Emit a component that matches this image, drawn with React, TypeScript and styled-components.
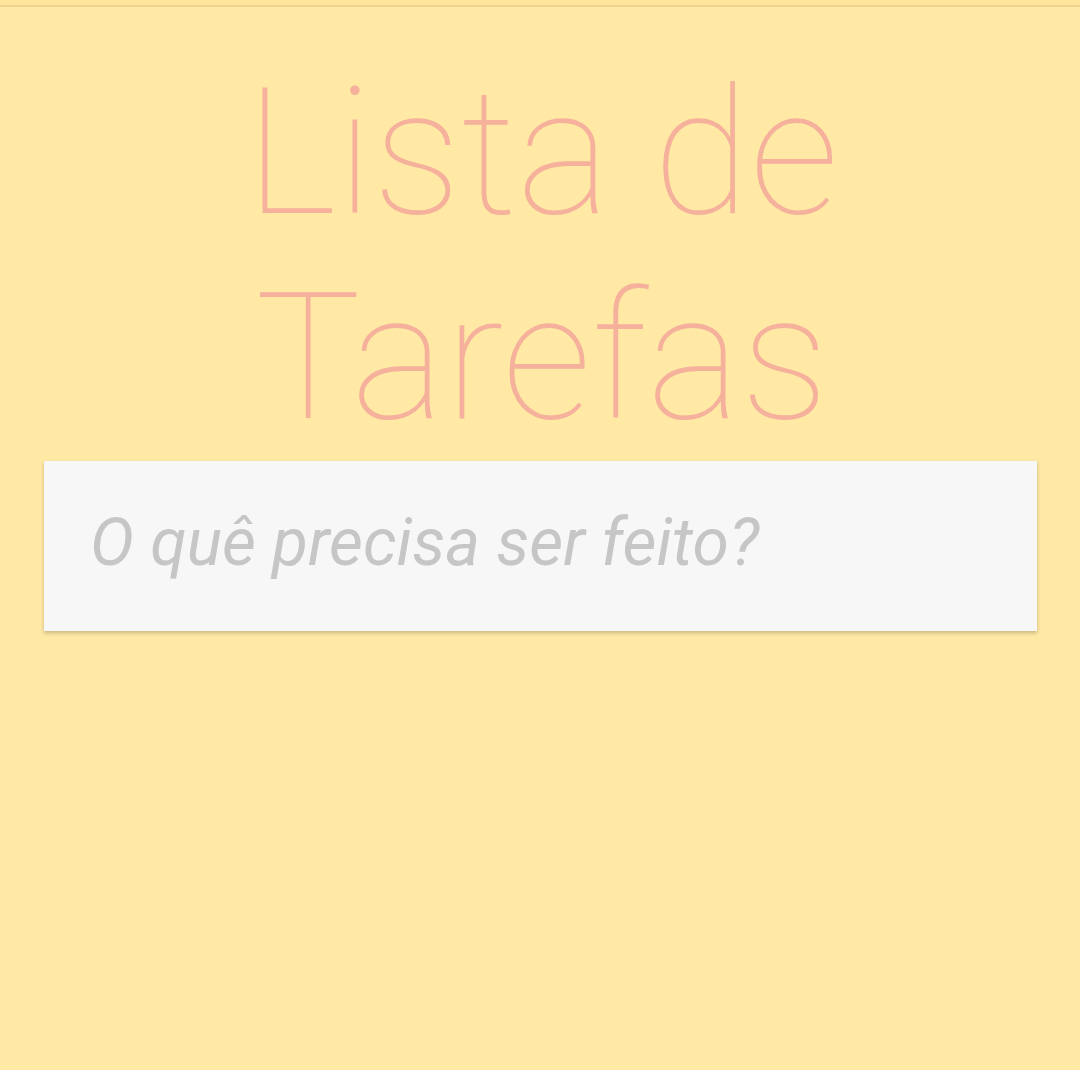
import styled, { createGlobalStyle } from 'styled-components'

const GlobalStyle = createGlobalStyle`
  html, body {
    margin: 0;
    padding: 0;
    background: #ffe9a5;
  }
  body {
    font-family: Roboto, "Liberation Sans", sans-serif;
  }
`

const Page = styled.div`
  min-height: 1070px;
  background: #ffe9a5;
  display: flex;
  flex-direction: column;
  align-items: stretch;
`

const TopBar = styled.div`
  height: 5px;
  background: #ffe49b;
  border-bottom: 2px solid #eed291;
`

const Title = styled.h1`
  margin: 43px 0 1px;
  font-family: Roboto, "Liberation Sans", sans-serif;
  font-weight: 100;
  font-size: 177px;
  line-height: 205px;
  color: #f5b19c;
  text-align: center;
  padding-left: 4px;
`

const Form = styled.form`
  margin: 0 43px 0 44px;
`

const TaskInput = styled.input`
  box-sizing: border-box;
  width: 100%;
  height: 170px;
  padding: 0 46px 7px;
  border: none;
  outline: none;
  background: #f7f7f7;
  box-shadow: 0 2px 4px rgba(0, 0, 0, 0.22);
  font-family: Roboto, "Liberation Sans", sans-serif;
  font-size: 66px;
  font-style: italic;
  font-weight: 400;
  color: #555;

  &::placeholder {
    color: #c6c6c6;
    font-style: italic;
  }
`

export default function App(): JSX.Element {
  return (
    <>
      <GlobalStyle />
      <Page>
        <TopBar />
        <Title>Lista de Tarefas</Title>
        <Form onSubmit={e => e.preventDefault()}>
          <TaskInput placeholder="O quê precisa ser feito?" />
        </Form>
      </Page>
    </>
  )
}
